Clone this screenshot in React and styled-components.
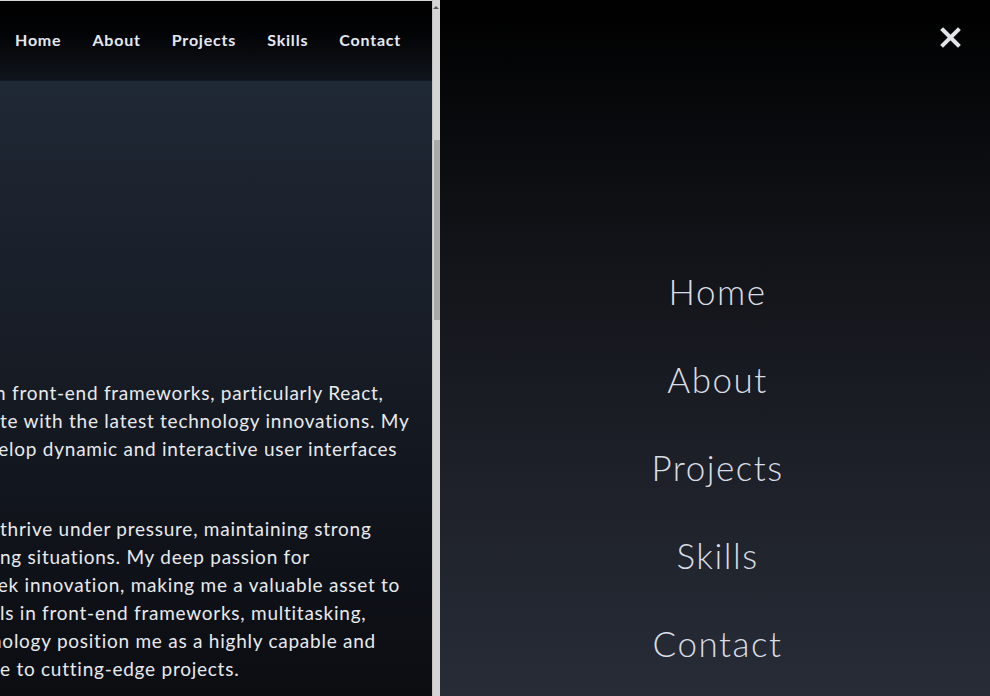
import React from 'react';
import styled, { createGlobalStyle } from 'styled-components';

const GlobalStyle = createGlobalStyle`
    html, body {
        margin: 0;
        padding: 0;
        background: #000;
        overflow: hidden;
    }
    * { box-sizing: border-box; }
`;

const Screen = styled.div`
    display: flex;
    width: 990px;
    height: 696px;
    font-family: Lato, "Open Sans", sans-serif;
`;

const Frame = styled.div`
    width: 432px;
    display: flex;
    flex-direction: column;
    overflow: hidden;
    border-top: 1px solid #d6d6d6;
`;

const Header = styled.nav`
    height: 80px;
    flex-shrink: 0;
    display: flex;
    align-items: center;
    gap: 31px;
    padding: 0 0 2px 15px;
    background: linear-gradient(to bottom, #000 0%, #020305 40%, #10141c 100%);
    border-bottom: 1px solid #141a24;
`;

const HeaderLink = styled.a`
    color: #e4e9f2;
    font-weight: 700;
    font-size: 16px;
    letter-spacing: 0.8px;
    text-decoration: none;
`;

const Body = styled.section`
    flex: 1;
    padding-top: 298px;
    background: linear-gradient(to bottom, #1f2835 0%, #181d27 40%, #0e1117 80%, #0b0d11 100%);
`;

const Paragraph = styled.div`
    margin-bottom: 24px;
`;

const Line = styled.div`
    white-space: nowrap;
    height: 28px;
    line-height: 28px;
    font-size: 19px;
    letter-spacing: 0.75px;
    color: #e8eaee;
    margin-left: ${p => -p.$shift || 0}px;
`;

const Scrollbar = styled.div`
    width: 8px;
    display: flex;
    flex-direction: column;
    align-items: flex-end;
    background: #d4d4d4;
    border-left: 1px solid #c4c4c4;
`;

const Arrow = styled.div`
    width: 0;
    height: 0;
    margin: 6px 1px 0 0;
    border-left: 3px solid transparent;
    border-right: 3px solid transparent;
    border-bottom: 3px solid #555;
`;

const Thumb = styled.div`
    width: 6px;
    height: 180px;
    margin-top: 131px;
    background: #a9a9a9;
`;

const Overlay = styled.aside`
    flex: 1;
    position: relative;
    background: linear-gradient(to bottom, #000 0%, #111318 35%, #1e2129 70%, #272c37 100%);
`;

const CloseButton = styled.button`
    position: absolute;
    top: 27px;
    right: 29px;
    width: 21px;
    height: 21px;
    padding: 0;
    border: none;
    background: none;
    cursor: pointer;
`;

const Menu = styled.nav`
    display: flex;
    flex-direction: column;
    align-items: center;
    padding-top: 247px;
`;

const MenuLink = styled.a`
    height: 88px;
    line-height: 88px;
    font-size: 35px;
    font-weight: 300;
    letter-spacing: 1.5px;
    color: #d9dde5;
    text-decoration: none;
    padding-left: 5px;
`;

const links = ['Home', 'About', 'Projects', 'Skills', 'Contact'];

const paragraphs = [
    [
        { text: 'n front-end frameworks, particularly React,', shift: 5 },
        { text: 'te with the latest technology innovations. My', shift: 0 },
        { text: 'velop dynamic and interactive user interfaces', shift: 12 },
        { text: ' ', shift: 0 }
    ],
    [
        { text: 'thrive under pressure, maintaining strong', shift: 0 },
        { text: 'ng situations. My deep passion for', shift: 0 },
        { text: 'eek innovation, making me a valuable asset to', shift: 13 },
        { text: 'ls in front-end frameworks, multitasking,', shift: 0 },
        { text: 'nology position me as a highly capable and', shift: 9 },
        { text: 'e to cutting-edge projects.', shift: 0 }
    ]
];

export default function App() {
    return (
        <Screen>
            <GlobalStyle />
            <Frame>
                <Header>
                    {links.map(l => <HeaderLink key={l} href="#">{l}</HeaderLink>)}
                </Header>
                <Body>
                    {paragraphs.map((p, i) => (
                        <Paragraph key={i}>
                            {p.map((l, j) => <Line key={j} $shift={l.shift}>{l.text}</Line>)}
                        </Paragraph>
                    ))}
                </Body>
            </Frame>
            <Scrollbar>
                <Arrow />
                <Thumb />
            </Scrollbar>
            <Overlay>
                <CloseButton aria-label="Close">
                    <svg width="21" height="21" viewBox="0 0 21 21">
                        <path d="M3 3 L18 18 M18 3 L3 18" stroke="#e2e4e8" strokeWidth="4" strokeLinecap="square" />
                    </svg>
                </CloseButton>
                <Menu>
                    {links.map(l => <MenuLink key={l} href="#">{l}</MenuLink>)}
                </Menu>
            </Overlay>
        </Screen>
    );
}
